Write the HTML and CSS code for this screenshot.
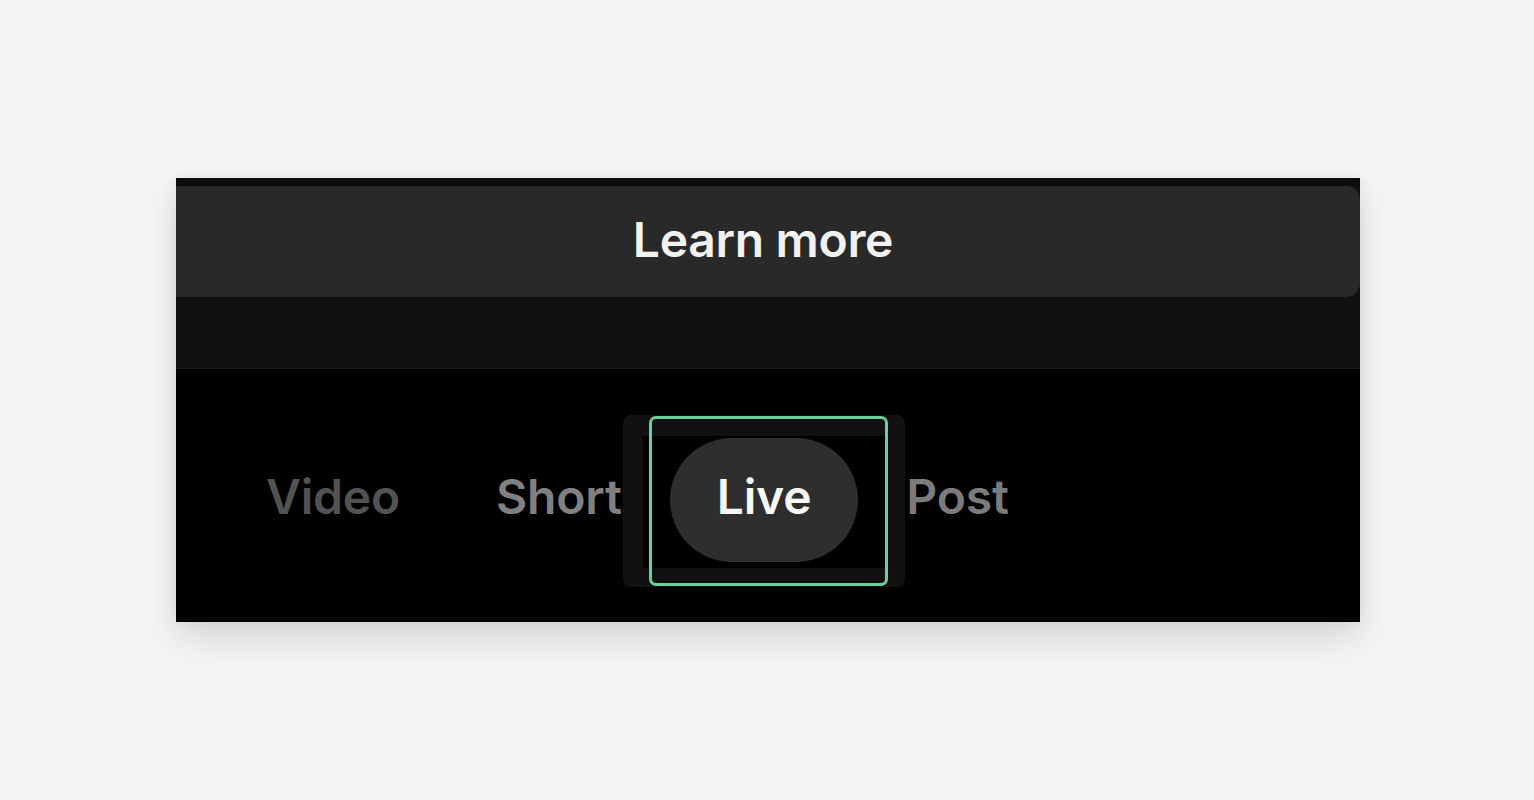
FILE: index.html
```html
<!DOCTYPE html>
<html lang="en">
<head>
<meta charset="utf-8">
<title>Live tab</title>
<link rel="stylesheet" href="styles.css">
</head>
<body>
<div class="page">
  <div class="card">
    <div class="top">
      <div class="learn-bar"><span class="learn-text">Learn more</span></div>
    </div>
    <div class="tabs-area">
      <div class="tabs">
        <div class="tab tab-video">Video</div>
        <div class="tab tab-short">Short</div>
        <div class="tab-live-wrap">
          <div class="tab tab-live">Live</div>
        </div>
        <div class="tab tab-post">Post</div>
      </div>
    </div>
  </div>
</div>
</body>
</html>
```

FILE: styles.css
```css
html, body {
  margin: 0;
  padding: 0;
  background: #f5f5f5;
}

.page {
  padding: 178px 0 0 176px;
  height: 800px;
  box-sizing: border-box;
}

.card {
  width: 1184px;
  height: 444px;
  background: #000;
  display: flex;
  flex-direction: column;
  overflow: hidden;
  box-shadow: 0 16px 36px rgba(0, 0, 0, 0.13), 0 0 14px rgba(0, 0, 0, 0.05);
  font-family: Inter, "Noto Sans", sans-serif;
  font-weight: 600;
}

.top {
  background: #111111;
  border-top: 8px solid #0d0d0d;
  height: 191px;
  box-sizing: border-box;
  border-bottom: 1px solid #161616;
}

.learn-bar {
  height: 111px;
  box-sizing: border-box;
  background: #292929;
  border-radius: 0 14px 14px 0;
  display: flex;
  align-items: center;
  justify-content: center;
  padding: 0 10px 5px 0;
}

.learn-text {
  color: #f2f2f2;
  font-size: 48px;
  letter-spacing: -0.3px;
}

.tabs-area {
  flex: 1;
  padding: 69px 0 0 42px;
}

.tabs {
  display: flex;
  align-items: center;
  height: 124px;
}

.tab {
  padding: 0 48px 6px;
  font-size: 48px;
  letter-spacing: -0.2px;
  line-height: 118px;
  white-space: nowrap;
}

.tab-video { color: #525252; }
.tab-short { color: #808080; }
.tab-post { color: #7b7b7b; }

.tab-live-wrap {
  position: relative;
}

.tab-live-wrap::before {
  content: "";
  position: absolute;
  left: -47px;
  right: -47px;
  top: -23px;
  bottom: -25px;
  background: #000;
  border-style: solid;
  border-color: #111111;
  border-width: 21px 19px 19px 20px;
  border-radius: 8px;
}

.tab-live-wrap::after {
  content: "";
  position: absolute;
  left: -21px;
  right: -30px;
  top: -22px;
  bottom: -24px;
  border: 3px solid #6fcf9b;
  border-radius: 7px;
}

.tab-live {
  position: relative;
  background: #2e2e2e;
  color: #f7f7f7;
  border-radius: 62px;
  padding: 0 47px 6px;
}
```
